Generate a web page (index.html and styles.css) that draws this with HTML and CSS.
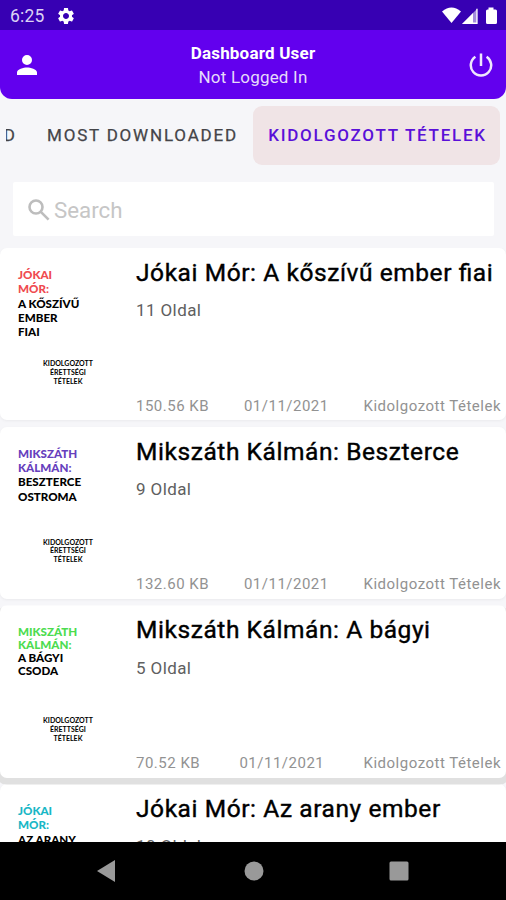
FILE: index.html
```html
<!DOCTYPE html>
<html lang="hu">
<head>
    <meta charset="UTF-8">
    <meta name="viewport" content="width=device-width, initial-scale=1.0">
    <title>Dashboard User</title>
    <link rel="stylesheet" href="styles.css">
</head>
<body>
    <div class="screen">
        <div class="status-bar">
            <span class="clock">6:25</span>
            <svg class="gear" width="20" height="20" viewBox="0 0 24 24"><path fill="#fff" d="M19.14 12.94c.04-.3.06-.61.06-.94 0-.32-.02-.64-.07-.94l2.03-1.58c.18-.14.23-.41.12-.61l-1.92-3.32c-.12-.22-.37-.29-.59-.22l-2.39.96c-.5-.38-1.03-.7-1.62-.94l-.36-2.54c-.04-.24-.24-.41-.48-.41h-3.84c-.24 0-.43.17-.47.41l-.36 2.54c-.59.24-1.13.57-1.62.94l-2.39-.96c-.22-.08-.47 0-.59.22L2.74 8.87c-.12.21-.08.47.12.61l2.03 1.58c-.05.3-.09.63-.09.94s.02.64.07.94l-2.03 1.58c-.18.14-.23.41-.12.61l1.92 3.32c.12.22.37.29.59.22l2.39-.96c.5.38 1.03.7 1.62.94l.36 2.54c.05.24.24.41.48.41h3.84c.24 0 .44-.17.47-.41l.36-2.54c.59-.24 1.13-.56 1.62-.94l2.39.96c.22.08.47 0 .59-.22l1.92-3.32c.12-.22.07-.47-.12-.61l-2.01-1.58zM12 15.6c-1.98 0-3.6-1.62-3.6-3.6s1.62-3.6 3.6-3.6 3.6 1.62 3.6 3.6-1.62 3.6-3.6 3.6z"/></svg>
            <svg class="signals" width="56" height="18" viewBox="0 0 56 18">
                <path fill="#fff" d="M0 4.5Q9.500-3.500 19 4.500L9.500 16z"/>
                <path fill="#fff" fill-opacity=".55" d="M35.500 1.500V17H20z"/>
                <path fill="#fff" d="M31 6V17H20zM34.300 1.700h1.200V17h-1.200zM31 15.600h4V17h-4z"/>
                <path fill="#fff" d="M46.500 0.500h5v2h2q1.500 0 1.500 1.500v11.500q0 1.500-1.500 1.500h-8q-1.500 0-1.500-1.500V4q0-1.500 1.500-1.500h1z"/>
            </svg>
        </div>
        <header class="toolbar">
            <svg width="20" height="20" viewBox="0 0 20 20"><path fill="#fff" d="M10 10a5 5 0 1 0 0-10 5 5 0 0 0 0 10zm0 2.500c-3.400 0-10 1.700-10 5V20h20v-2.500c0-3.300-6.600-5-10-5z"/></svg>
            <div class="user">
                <div class="user-title">Dashboard User</div>
                <div class="user-sub">Not Logged In</div>
            </div>
            <svg width="24" height="24" viewBox="0 0 24 24" fill="none" stroke="#efe6fd" stroke-width="2.500"><path d="M12 .5v12.500M6.400 3.800a10.200 10.200 0 1 0 11.200 0"/></svg>
        </header>
        <nav class="tabs">
            <span class="tab-cut">D</span>
            <span class="tab">MOST DOWNLOADED</span>
            <span class="tab active">KIDOLGOZOTT TÉTELEK</span>
        </nav>
        <div class="search">
            <svg width="22" height="22" viewBox="0 0 22 22" fill="none" stroke="#bdbdbd" stroke-width="2.600"><circle cx="8" cy="8" r="6.500"/><path d="M12.600 12.600l8 8"/></svg>
            <span>Search</span>
        </div>
        <main class="list">
            <article class="card">
                <div class="cover">
                    <div class="cover-title"><span class="red">JÓKAI<br>MÓR:</span><br>A KŐSZÍVŰ<br>EMBER<br>FIAI</div>
                    <div class="cover-sub">KIDOLGOZOTT<br>ÉRETTSÉGI<br>TÉTELEK</div>
                </div>
                <div class="info">
                    <h2>Jókai Mór: A kőszívű ember fiai</h2>
                    <p>11 Oldal</p>
                    <div class="meta"><span>150.56 KB</span><span>01/11/2021</span><span>Kidolgozott Tételek</span></div>
                </div>
            </article>
            <article class="card">
                <div class="cover">
                    <div class="cover-title"><span class="purple">MIKSZÁTH<br>KÁLMÁN:</span><br>BESZTERCE<br>OSTROMA</div>
                    <div class="cover-sub">KIDOLGOZOTT<br>ÉRETTSÉGI<br>TÉTELEK</div>
                </div>
                <div class="info">
                    <h2>Mikszáth Kálmán: Beszterce</h2>
                    <p>9 Oldal</p>
                    <div class="meta"><span>132.60 KB</span><span>01/11/2021</span><span>Kidolgozott Tételek</span></div>
                </div>
            </article>
            <article class="card raised">
                <div class="cover">
                    <div class="cover-title tight"><span class="green">MIKSZÁTH<br>KÁLMÁN:</span><br>A BÁGYI<br>CSODA</div>
                    <div class="cover-sub">KIDOLGOZOTT<br>ÉRETTSÉGI<br>TÉTELEK</div>
                </div>
                <div class="info">
                    <h2>Mikszáth Kálmán: A bágyi</h2>
                    <p>5 Oldal</p>
                    <div class="meta"><span>70.52 KB</span><span>01/11/2021</span><span>Kidolgozott Tételek</span></div>
                </div>
            </article>
            <article class="card">
                <div class="cover">
                    <div class="cover-title"><span class="cyan">JÓKAI<br>MÓR:</span><br>AZ ARANY</div>
                </div>
                <div class="info">
                    <h2>Jókai Mór: Az arany ember</h2>
                    <p>10 Oldal</p>
                </div>
            </article>
        </main>
        <footer class="nav-bar">
            <svg width="18" height="22" viewBox="0 0 18 22"><path fill="#999" d="M18 0v22L0 11z"/></svg>
            <svg class="home" width="20" height="20" viewBox="0 0 20 20"><circle cx="10" cy="10" r="9.500" fill="#999"/></svg>
            <svg width="20" height="20" viewBox="0 0 20 20"><rect x=".5" y=".5" width="19" height="19" rx="1.500" fill="#999"/></svg>
        </footer>
    </div>
</body>
</html>
```
FILE: styles.css
```css
* {
    box-sizing: border-box;
}

body {
    margin: 0;
    font-family: Roboto, "Liberation Sans", sans-serif;
    background-color: #f6f6f9;
}

.screen {
    width: 506px;
    height: 900px;
    overflow: hidden;
    display: flex;
    flex-direction: column;
}

.status-bar {
    height: 30px;
    flex-shrink: 0;
    display: flex;
    align-items: center;
    padding: 1px 8px 0 10px;
    background-color: #3700b3;
    color: #dcd3f5;
}

.clock {
    font-size: 17.5px;
    width: 46px;
    letter-spacing: 0.2px;
}

.signals {
    margin-left: auto;
}

.toolbar {
    height: 69px;
    flex-shrink: 0;
    display: flex;
    align-items: center;
    justify-content: space-between;
    padding: 0 13px 0 17px;
    background-color: #6200ee;
    border-radius: 0 0 12px 12px;
    color: #fff;
}

.user {
    text-align: center;
    line-height: 24px;
}

.user-title {
    font-size: 17px;
    font-weight: 700;
    letter-spacing: 0.2px;
}

.user-sub {
    font-size: 17px;
    letter-spacing: 0.2px;
    color: #e6dafa;
}

.tabs {
    height: 72px;
    flex-shrink: 0;
    display: flex;
    align-items: center;
    padding: 0 6px 0 6px;
    font-size: 17px;
    font-weight: 400;
    letter-spacing: 1.8px;
    color: #444448;
    -webkit-text-stroke: 0.25px;
    white-space: nowrap;
    overflow: hidden;
}

.tab-cut {
    width: 9px;
    display: flex;
    justify-content: flex-end;
    overflow: hidden;
    letter-spacing: 0;
}

.tab {
    margin-left: 32px;
}

.tab.active {
    width: 247px;
    height: 59px;
    margin-left: auto;
    line-height: 59px;
    padding-left: 2px;
    text-align: center;
    font-weight: 500;
    letter-spacing: 1.75px;
    background-color: #f0e4e6;
    border-radius: 9px;
    color: #5a10d8;
    -webkit-text-stroke: 0;
}

.search {
    height: 54px;
    flex-shrink: 0;
    margin: 11px 12px 12px 13px;
    padding: 2px 15px 0;
    display: flex;
    align-items: center;
    gap: 4px;
    background-color: #fff;
    border-radius: 2px;
    font-size: 22.3px;
    color: #c6c6c6;
}

.list {
    flex: 1;
    min-height: 0;
    overflow: hidden;
    display: flex;
    flex-direction: column;
    gap: 6.5px;
}

.card {
    height: 172.2px;
    flex-shrink: 0;
    display: flex;
    background-color: #fff;
    border-radius: 7px;
    box-shadow: 0 1px 3px rgba(0, 0, 0, 0.05);
}

.card.raised {
    box-shadow: 0 4px 0 3px #e0e0e0;
    clip-path: inset(0 0 -7px 0);
}

.cover {
    width: 136px;
    padding: 20px 0 0 18px;
    font-family: Lato, sans-serif;
    color: #000;
}

.cover-title {
    height: 91px;
    font-size: 11.6px;
    font-weight: 900;
    line-height: 14.3px;
}

.cover-title.tight {
    padding-top: 1px;
    line-height: 12.8px;
}

.cover-sub {
    width: 100px;
    font-size: 7px;
    font-weight: 700;
    line-height: 8.8px;
    text-align: center;
}

.red {
    color: #ef4b50;
}

.purple {
    color: #6640bd;
}

.green {
    color: #4cdc50;
}

.cyan {
    color: #19b7c6;
}

.info {
    flex: 1;
    display: flex;
    flex-direction: column;
    padding: 10px 5px 4.6px 0;
}

.info h2 {
    margin: 0;
    font-size: 24.5px;
    font-weight: 400;
    line-height: 30px;
    letter-spacing: 0.57px;
    font-feature-settings: "liga";
    -webkit-text-stroke: 0.4px;
    color: #000;
    white-space: nowrap;
}

.info p {
    margin: 11.4px 0 0;
    font-size: 17px;
    line-height: 22px;
    letter-spacing: 0.4px;
    color: #606060;
}

.meta {
    margin-top: auto;
    display: flex;
    justify-content: space-between;
    font-size: 15px;
    line-height: 20px;
    letter-spacing: 0.5px;
    color: #929292;
}

.nav-bar {
    height: 58px;
    flex-shrink: 0;
    display: flex;
    align-items: center;
    justify-content: space-between;
    padding: 0 97px;
    background-color: #000;
}

.home {
    margin-left: 3px;
}
```
